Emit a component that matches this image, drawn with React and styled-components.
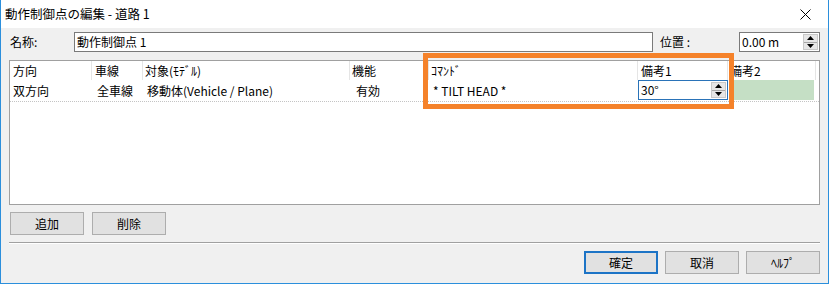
import React from "react";
import styled, { createGlobalStyle } from "styled-components";

const GlobalStyle = createGlobalStyle`
  html, body {
    margin: 0;
    padding: 0;
    background: #ffffff;
  }
  body {
    font-family: "Noto Sans CJK JP", "Noto Sans", sans-serif;
    font-size: 12px;
    color: #000;
  }
  * {
    box-sizing: border-box;
  }
`;

const Window = styled.div`
  position: relative;
  width: 829px;
  height: 284px;
  display: flex;
  flex-direction: column;
  border: 1px solid #2b8fdc;
  border-top: none;
  background: #f0f0f0;
`;

const TitleBar = styled.div`
  height: 28px;
  flex: none;
  display: flex;
  align-items: center;
  justify-content: space-between;
  padding-left: 4px;
  background: #ffffff;
  line-height: 14px;
  font-size: 12.5px;
`;

const CloseBox = styled.div`
  width: 46px;
  height: 28px;
  display: flex;
  align-items: center;
  justify-content: center;
`;

const Body = styled.div`
  flex: 1;
  display: flex;
  flex-direction: column;
  padding: 4px 8px 9px 8px;
`;

const NameRow = styled.div`
  display: flex;
  align-items: center;
  height: 20px;
  line-height: 14px;
`;

const Label = styled.span`
  width: ${({ $w }) => $w}px;
  padding-left: ${({ $pad }) => $pad || 0}px;
  flex: none;
`;

const TextBox = styled.div`
  width: ${({ $w }) => $w}px;
  height: 20px;
  flex: none;
  display: flex;
  align-items: center;
  border: 1px solid ${({ $focus }) => ($focus ? "#2a73b8" : "#7a7a7a")};
  background: #ffffff;
  padding-left: 2px;
  line-height: 14px;
`;

const BoxText = styled.span`
  flex: 1;
`;

const Spin = styled.div`
  width: 15px;
  height: 16px;
  margin-right: 1px;
  display: flex;
  flex-direction: column;
  border: 1px solid #c8c8c8;
  background: #e6e6e6;
`;

const SpinHalf = styled.div`
  flex: 1;
  display: flex;
  align-items: center;
  justify-content: center;
  & + & {
    border-top: 1px solid #a8a8a8;
  }
`;

const ListView = styled.div`
  margin-top: 8px;
  height: 145px;
  flex: none;
  border: 1px solid #a0a0a0;
  background: #ffffff;
`;

const Grid = styled.div`
  display: grid;
  grid-template-columns: 82px 51px 207px 79px 209px 90px 88px;
  height: ${({ $h }) => $h}px;
  line-height: 14px;
`;

const HeadCell = styled.div`
  display: flex;
  align-items: center;
  padding-left: ${({ $pad }) => $pad}px;
  border-right: 1px solid #e5e5e5;
  white-space: nowrap;
`;

const DataRow = styled(Grid)`
  border-bottom: 1px dotted #c4c4c4;
`;

const Cell = styled.div`
  display: flex;
  align-items: center;
  padding-left: ${({ $pad }) => $pad}px;
  white-space: nowrap;
`;

const GreenCell = styled.div`
  margin: 0 2px 1px 2px;
  background: #c5dfc5;
`;

const ButtonRow = styled.div`
  display: flex;
  gap: ${({ $end }) => ($end ? 7 : 8)}px;
  justify-content: ${({ $end }) => ($end ? "flex-end" : "flex-start")};
  margin-top: 7px;
  padding-left: ${({ $end }) => ($end ? 0 : 1)}px;
`;

const Button = styled.div`
  width: 74px;
  height: 23px;
  display: flex;
  align-items: center;
  justify-content: center;
  background: #e1e1e1;
  border: ${({ $default }) =>
    $default ? "2px solid #1d74c6" : "1px solid #adadad"};
  line-height: 14px;
`;

const Separator = styled.div`
  margin-top: 7px;
  height: 2px;
  border-top: 1px solid #a0a0a0;
  border-bottom: 1px solid #ffffff;
`;

const Highlight = styled.div`
  position: absolute;
  left: 422px;
  top: 53px;
  width: 311px;
  height: 56px;
  border: 5px solid #f5822a;
  pointer-events: none;
`;

const SpinButton = () => (
  <Spin>
    <SpinHalf>
      <svg width="7" height="4" viewBox="0 0 7 4">
        <path d="M0 4 L3.5 0 L7 4 Z" fill="#000" />
      </svg>
    </SpinHalf>
    <SpinHalf>
      <svg width="7" height="4" viewBox="0 0 7 4">
        <path d="M0 0 L3.5 4 L7 0 Z" fill="#000" />
      </svg>
    </SpinHalf>
  </Spin>
);

const columns = [
  { title: "方向", pad: 3 },
  { title: "車線", pad: 3 },
  { title: "対象(ﾓﾃﾞﾙ)", pad: 2 },
  { title: "機能", pad: 2 },
  { title: "ｺﾏﾝﾄﾞ", pad: 2 },
  { title: "備考1", pad: 3 },
  { title: "備考2", pad: 2 },
];

const App = () => {
  return (
    <>
      <GlobalStyle />
      <Window>
        <TitleBar>
          <span>動作制御点の編集 - 道路 1</span>
          <CloseBox>
            <svg width="11" height="11" viewBox="0 0 11 11">
              <path d="M0.5 0.5 L10.5 10.5 M10.5 0.5 L0.5 10.5" stroke="#000" strokeWidth="1" />
            </svg>
          </CloseBox>
        </TitleBar>
        <Body>
          <NameRow>
            <Label $w={65} $pad={1}>名称:</Label>
            <TextBox $w={579}>
              <BoxText>動作制御点 1</BoxText>
            </TextBox>
            <Label $w={86} $pad={7}>位置 :</Label>
            <TextBox $w={81}>
              <BoxText>0.00 m</BoxText>
              <SpinButton />
            </TextBox>
          </NameRow>

          <ListView>
            <Grid $h={19}>
              {columns.map((col) => (
                <HeadCell key={col.title} $pad={col.pad}>
                  {col.title}
                </HeadCell>
              ))}
            </Grid>
            <DataRow $h={22}>
              <Cell $pad={3}>双方向</Cell>
              <Cell $pad={5}>全車線</Cell>
              <Cell $pad={4}>移動体(Vehicle / Plane)</Cell>
              <Cell $pad={6}>有効</Cell>
              <Cell $pad={4}>* TILT HEAD *</Cell>
              <TextBox $w={90} $focus>
                <BoxText>30°</BoxText>
                <SpinButton />
              </TextBox>
              <GreenCell />
            </DataRow>
          </ListView>

          <ButtonRow>
            <Button>追加</Button>
            <Button>削除</Button>
          </ButtonRow>

          <Separator />

          <ButtonRow $end>
            <Button $default>確定</Button>
            <Button>取消</Button>
            <Button>ﾍﾙﾌﾟ</Button>
          </ButtonRow>
        </Body>
        <Highlight />
      </Window>
    </>
  );
};

export default App;
